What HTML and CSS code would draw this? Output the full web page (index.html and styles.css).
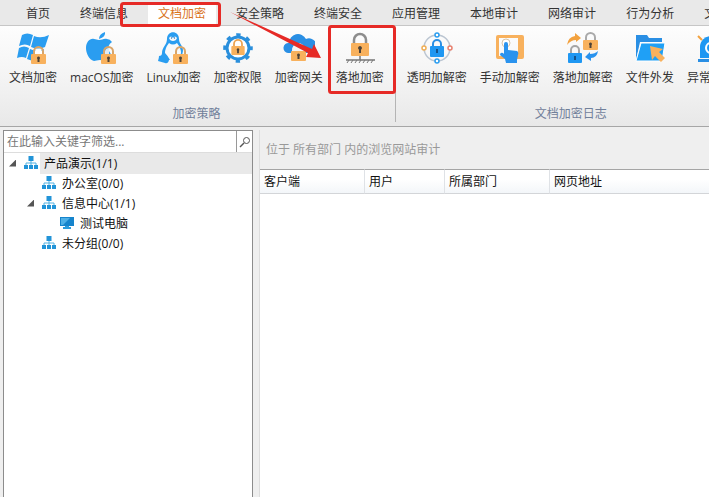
FILE: index.html
```html
<!DOCTYPE html>
<html lang="zh-CN">
<head>
    <meta charset="UTF-8">
    <meta name="viewport" content="width=device-width, initial-scale=1.0">
    <title>文档加密</title>
    <link rel="stylesheet" href="styles.css">
</head>
<body>

<!-- Shared icons -->
<svg class="sprite" aria-hidden="true">
    <symbol id="lock" viewBox="0 0 15 18">
        <path d="M3 9V5.500a4.500 4.500 0 0 1 9 0V9" fill="none" stroke="currentColor" stroke-width="2"/>
        <rect x="0" y="8" width="15" height="10" rx="1" fill="#f8b15d"/>
        <path d="M7.500 10.500a1.500 1.500 0 0 1 1 2.600v2.900h-2v-2.900a1.500 1.500 0 0 1 1-2.600z" fill="#4c4238"/>
    </symbol>
    <symbol id="org" viewBox="0 0 14 14">
        <path d="M4.500 0h5v5h-5zM0 9h4v4H0zM5 9h4v4H5zM10 9h4v4h-4z" fill="#2294d8"/>
        <path d="M7 5v4M2 9V7h10v2" fill="none" stroke="#55b2e2"/>
    </symbol>
</svg>

<nav class="tabs">
    <button type="button" class="tab">首页</button>
    <button type="button" class="tab">终端信息</button>
    <button type="button" class="tab active">文档加密</button>
    <button type="button" class="tab">安全策略</button>
    <button type="button" class="tab">终端安全</button>
    <button type="button" class="tab">应用管理</button>
    <button type="button" class="tab">本地审计</button>
    <button type="button" class="tab">网络审计</button>
    <button type="button" class="tab">行为分析</button>
    <button type="button" class="tab">文</button>
</nav>

<div class="ribbon">
    <section class="group">
        <div class="tools">
            <button type="button" class="tool">
                <svg class="icon" viewBox="0 0 32 32">
                    <path d="M5 3q5-3 11 0l-3 11q-5-3-11 0zM17 4q7 3 15-1l-4 12q-7 3-14 0zM2 16q5-3 10 0l-3 10q-4-2-9 0zM13 17q7 3 14 0l-2 10q-8 3-15 0z" fill="#2a9df0"/>
                    <path d="M17 23v-3a5 5 0 0 1 9 0v3z" fill="#fff"/>
                    <use href="#lock" x="14" y="14" width="15" height="18" color="#d9a569"/>
                </svg>
                <span>文档加密</span>
            </button>
            <button type="button" class="tool">
                <svg class="icon" viewBox="0 0 32 32">
                    <path d="M19 0q1 5-6 7 0-5 6-7zM13 8c3 0 5-2 8-1q3 0 5 3-5 3-3 9 1 3 4 4-3 6-7 6c-2 0-3-1-6-1s-4 1-6 1C3 28 0 21 0 16 0 10 4 6 8 7c2 0 3 1 5 1z" fill="#2a9df0"/>
                    <path d="M19 23v-4a4 4 0 0 1 4-3v7z" fill="#dcebf7"/>
                    <use href="#lock" x="15" y="14" width="15" height="18" color="#d9a569"/>
                </svg>
                <span>macOS加密</span>
            </button>
            <button type="button" class="tool">
                <svg class="icon" viewBox="0 0 32 32">
                    <path d="M9 7c0-9 12-9 12 0 0 5 4 6 4 12l-2 9H7l-3-7c0-6 5-8 5-14z" fill="#2a9df0"/>
                    <path d="M11 11q4 3 8 0 4 5 4 10l-2 7h-9q-2-4-5-7 0-5 4-10z" fill="#f7f9fb"/>
                    <path d="M11 6q2-3 4 0 2-3 4 0-1 3-4 3t-4-3z" fill="#f7f9fb"/>
                    <path d="M12 9h6l-3 2z" fill="#2a9df0"/>
                    <circle cx="13.500" cy="6" r=".7" fill="#2a6fa8"/>
                    <circle cx="16.500" cy="6" r=".7" fill="#2a6fa8"/>
                    <path d="M1 24q3 0 3-3 2-1 4 2l3 5q-1 4-4 3l-7-2q1-3 1-5z" fill="#2a9df0"/>
                    <use href="#lock" x="15" y="14" width="15" height="18" color="#d9a569"/>
                </svg>
                <span>Linux加密</span>
            </button>
            <button type="button" class="tool">
                <svg class="icon" viewBox="0 0 32 32">
                    <circle cx="16" cy="16" r="11" fill="#fff" stroke="#2a8fdc" stroke-width="3"/>
                    <circle cx="16" cy="16" r="13.300" fill="none" stroke="#2a8fdc" stroke-width="3" stroke-dasharray="4.400 6.050" stroke-dashoffset="2.200"/>
                    <use href="#lock" x="9" y="7" width="14" height="16" color="#eba352"/>
                </svg>
                <span>加密权限</span>
            </button>
            <button type="button" class="tool">
                <svg class="icon" viewBox="0 0 32 32">
                    <path d="M5 21a5 5 0 0 1 1-10 9 9 0 0 1 17-4 7 7 0 0 1 6 14z" fill="#2a8fe4"/>
                    <path d="M9 20v-2a6 6 0 0 1 13 0v2z" fill="#f4f4f4"/>
                    <use href="#lock" x="8" y="11" width="15" height="18" color="#f4f4f4"/>
                </svg>
                <span>加密网关</span>
            </button>
            <button type="button" class="tool">
                <svg class="icon" viewBox="0 0 32 32">
                    <path d="M10 12V8a6 6 0 0 1 12 0v4" fill="none" stroke="#8d8d8d" stroke-width="2.500"/>
                    <rect x="7" y="11" width="18" height="13" rx="1" fill="#f8b15d"/>
                    <path d="M16 14a2 2 0 0 1 1 3.700V21h-2v-3.300A2 2 0 0 1 16 14z" fill="#4c4238"/>
                    <path d="M16 24v4M2 28h29" stroke="#777" stroke-width="1.500"/>
                    <path d="M5 28l-2 3M9 28l-2 3M13 28l-2 3M17 28l-2 3M21 28l-2 3M25 28l-2 3M29 28l-2 3" stroke="#777"/>
                </svg>
                <span>落地加密</span>
            </button>
        </div>
        <h2 class="group-title">加密策略</h2>
    </section>

    <section class="group">
        <div class="tools">
            <button type="button" class="tool">
                <svg class="icon" viewBox="0 0 32 32">
                    <circle cx="16" cy="16" r="13" fill="none" stroke="#bcc6d2" stroke-width="1.500"/>
                    <g fill="#fff" stroke-width="1.500">
                        <circle cx="16" cy="3" r="2" stroke="#2a9df0"/>
                        <circle cx="16" cy="29" r="2" stroke="#2a9df0"/>
                        <circle cx="3" cy="16" r="2" stroke="#f0ae55"/>
                        <circle cx="29" cy="16" r="2" stroke="#e8806e"/>
                    </g>
                    <path d="M12 15v-3a4 4 0 0 1 8 0v3" fill="none" stroke="#2a8fe4" stroke-width="2"/>
                    <rect x="9" y="14" width="14" height="11" rx="1" fill="#1f97f2"/>
                    <path d="M16 17v4" stroke="#17538a" stroke-width="2"/>
                </svg>
                <span>透明加解密</span>
            </button>
            <button type="button" class="tool">
                <svg class="icon" viewBox="0 0 32 32">
                    <path d="M4 3h24q2 0 2 2v20q0 2-2 2H4q-2 0-2-2V5q0-2 2-2zm1 3v18h19V6z" fill="#f8b15d" fill-rule="evenodd"/>
                    <circle cx="12" cy="11" r="4" fill="#fff" stroke="#d8c3a8"/>
                    <path d="M10 12q0-2 2-2t2 2v6l9 1q2 1 1 4l-1 5v3H12l-1-4-5-4q0-3 3-2l1 1z" fill="#2a93ee"/>
                </svg>
                <span>手动加解密</span>
            </button>
            <button type="button" class="tool">
                <svg class="icon" viewBox="0 0 32 32">
                    <use href="#lock" x="16" y="0" width="15" height="18" color="#aaa"/>
                    <path d="M4 22v-4a4 4 0 0 1 8 0v4" fill="none" stroke="#a5a5a5" stroke-width="2"/>
                    <rect x="1" y="21" width="14" height="10" rx="1" fill="#1f97f2"/>
                    <path d="M8 24v4" stroke="#17538a" stroke-width="2"/>
                    <path d="M0 13Q1 5 8 4V1l6 5-5 4V8Q4 8 0 13z" fill="#f3a23f"/>
                    <path d="M31 19q-1 7-7 7v3l-6-4 5-5v2q5 0 8-3z" fill="#2a93ee"/>
                </svg>
                <span>落地加解密</span>
            </button>
            <button type="button" class="tool">
                <svg class="icon" viewBox="0 0 32 32">
                    <path d="M2 28V3h11l2 3h13v4H6z" fill="#2a8fe4"/>
                    <path d="M7 11h24l-3 18H2z" fill="#1fa0f6" stroke="#fff"/>
                    <path d="M16 14l13 3-4 3 6 6-4 4-6-6-3 4z" fill="#f8b15d"/>
                </svg>
                <span>文件外发</span>
            </button>
            <button type="button" class="tool">
                <svg class="icon" viewBox="0 0 32 32">
                    <path d="M5 26V15a11 11 0 0 1 22 0v11z" fill="#1f97f2"/>
                    <circle cx="16" cy="16" r="5" fill="none" stroke="#fff" stroke-width="2"/>
                    <path d="M3 27h26v3H3z" fill="#2a8fe4"/>
                    <path d="M3 4l4 4M29 4l-4 4" stroke="#f3a23f" stroke-width="2"/>
                </svg>
                <span>异常告警</span>
            </button>
        </div>
        <h2 class="group-title">文档加密日志</h2>
    </section>
</div>

<div class="workspace">
    <aside class="sidebar">
        <form class="search">
            <input type="text" placeholder="在此输入关键字筛选..." aria-label="关键字筛选">
            <button type="button" aria-label="搜索">
                <svg width="12" height="12" viewBox="0 0 12 12">
                    <circle cx="7.500" cy="4.500" r="3" fill="none" stroke="#555"/>
                    <path d="M5 7L1 11" stroke="#555" stroke-width="1.500"/>
                </svg>
            </button>
        </form>
        <ul class="tree">
            <li class="node">
                <button type="button" class="toggle" aria-label="折叠"></button>
                <svg class="node-icon"><use href="#org"/></svg>
                <span class="node-name selected">产品演示(1/1)</span>
            </li>
            <li class="node level-1">
                <span class="toggle-space"></span>
                <svg class="node-icon"><use href="#org"/></svg>
                <span class="node-name">办公室(0/0)</span>
            </li>
            <li class="node level-1">
                <button type="button" class="toggle" aria-label="折叠"></button>
                <svg class="node-icon"><use href="#org"/></svg>
                <span class="node-name">信息中心(1/1)</span>
            </li>
            <li class="node level-2">
                <span class="toggle-space"></span>
                <svg class="node-icon" viewBox="0 0 14 14">
                    <path d="M0 1h14v9H0z" fill="#1684cc"/>
                    <path d="M1 2h9L3 9H1z" fill="#4fb0e6"/>
                    <path d="M5 10h4v1h2v2H3v-2h2z" fill="#2b9bdc"/>
                </svg>
                <span class="node-name">测试电脑</span>
            </li>
            <li class="node level-1">
                <span class="toggle-space"></span>
                <svg class="node-icon"><use href="#org"/></svg>
                <span class="node-name">未分组(0/0)</span>
            </li>
        </ul>
    </aside>

    <main class="content">
        <h1 class="path">位于 所有部门 内的浏览网站审计</h1>
        <table class="records">
            <thead>
                <tr>
                    <th class="col-client">客户端</th>
                    <th class="col-user">用户</th>
                    <th class="col-dept">所属部门</th>
                    <th>网页地址</th>
                </tr>
            </thead>
        </table>
    </main>
</div>

<!-- Guide marks drawn over the window -->
<svg class="marks" width="400" height="100" viewBox="0 0 400 100" aria-hidden="true">
    <g fill="none" stroke="#e62a26" stroke-width="3">
        <rect x="121.500" y="3.500" width="98" height="22" rx="2"/>
        <rect x="329.500" y="26.500" width="65" height="66" rx="2"/>
    </g>
    <path d="M230 12L312 49l2-5 7 14-15-1 2-4z" fill="#e62a26"/>
</svg>

</body>
</html>
```

FILE: styles.css
```css
* {
    box-sizing: border-box;
}
body {
    display: flex;
    flex-direction: column;
    min-height: 100vh;
    margin: 0;
    overflow: hidden;
    background-color: #e9e9e9;
    color: #333;
    font: 12px/18px "Open Sans", "Noto Sans CJK SC", sans-serif;
}
button, input {
    margin: 0;
    padding: 0;
    border: none;
    border-radius: 0;
    background: none;
    color: inherit;
    font: inherit;
}
h1, h2 {
    margin: 0;
    font-size: 12px;
    font-weight: normal;
}
.sprite {
    display: none;
}

/* Tabs */
.tabs {
    display: flex;
    gap: 10px;
    padding: 3px 0 0 16px;
    overflow: hidden;
}
.tab {
    flex: none;
    height: 22px;
    padding: 0 10px;
    line-height: 20px;
}
.tab.active {
    background-color: #fff;
    color: #d9731a;
}

/* Ribbon */
.ribbon {
    display: flex;
    height: 102px;
    overflow: hidden;
    border-top: 1px solid #c6c6c6;
    border-bottom: 1px solid #a6a6a6;
    background: linear-gradient(#fdfdfd, #f4f4f4 50%, #e8e8e8);
}
.group {
    flex: none;
    padding: 6px 12px 0 9px;
    background: linear-gradient(#b4b4b4, #b4b4b4) right 4px / 1px 92px no-repeat;
}
.group + .group {
    padding-left: 11px;
}
.tools {
    display: flex;
    gap: 13px;
}
.tool {
    display: flex;
    flex-direction: column;
    align-items: center;
    gap: 5px;
    white-space: nowrap;
}
.icon {
    width: 32px;
    height: 32px;
}
.group-title {
    margin-top: 18px;
    color: #71809a;
    text-align: center;
}

/* Workspace */
.workspace {
    display: flex;
    flex: 1;
    gap: 6px;
    padding: 3px 0 0 3px;
    background-color: #efefef;
}
.sidebar {
    flex: none;
    width: 250px;
    border: 1px solid #8c8c8c;
    border-bottom: none;
    background-color: #fff;
}
.search {
    display: flex;
    height: 22px;
    border-bottom: 1px solid #ddd;
}
.search input {
    flex: 1;
    min-width: 0;
    padding-left: 3px;
}
.search input::placeholder {
    color: #777;
    opacity: 1;
}
.search button {
    display: flex;
    align-items: center;
    justify-content: center;
    width: 16px;
    border-left: 1px solid #999;
}
.tree {
    margin: 0;
    padding: 0;
    list-style: none;
    color: #111;
}
.node {
    display: flex;
    align-items: center;
    height: 20px;
    padding-left: 5px;
}
.level-1 {
    padding-left: 23px;
}
.level-2 {
    padding-left: 41px;
}
.toggle, .toggle-space {
    width: 7px;
    height: 7px;
    margin-right: 8px;
}
.toggle {
    background-color: #555;
    clip-path: polygon(100% 0, 100% 100%, 0 100%);
}
.node-icon {
    width: 14px;
    height: 14px;
    margin-right: 2px;
}
.node-name {
    flex: 1;
    padding: 1px 0 0 4px;
    line-height: 20px;
}
.node-name.selected {
    background-color: #e9e9e9;
}

.content {
    flex: 1;
    min-width: 0;
    border-left: 1px solid #ddd;
    background-color: #fff;
}
.path {
    padding: 11px 6px 10px;
    background-color: #efefef;
    color: #999;
}
.records {
    width: 100%;
    border-collapse: separate;
    border-spacing: 0;
    table-layout: fixed;
}
.records th {
    height: 25px;
    padding: 0 4px;
    border-top: 1px solid #a5a5a5;
    border-right: 1px solid #dfe2e6;
    border-bottom: 1px solid #d3d5d8;
    background: linear-gradient(#fff 40%, #f3f6f9);
    color: #111;
    font-weight: normal;
    text-align: left;
}
.records th:last-child {
    border-right: none;
}
.col-client, .col-dept {
    width: 105px;
}
.col-user {
    width: 80px;
}

.marks {
    position: absolute;
    top: 0;
    left: 0;
    pointer-events: none;
}
```
